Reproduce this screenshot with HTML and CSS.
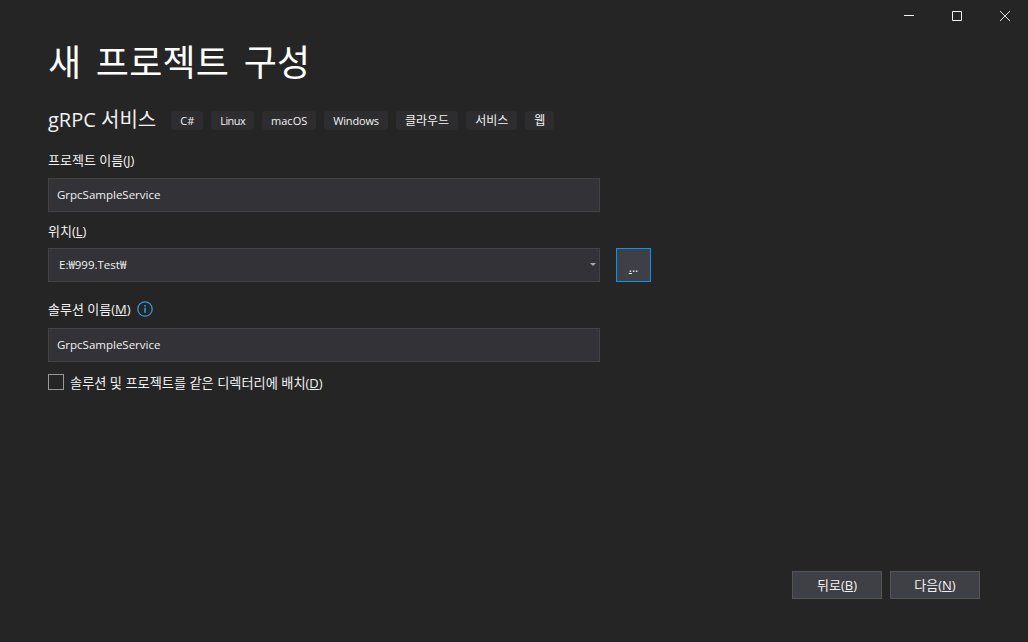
FILE: index.html
```html
<!DOCTYPE html>
<html lang="ko">
<head>
<meta charset="utf-8">
<title>새 프로젝트 구성</title>
<link rel="stylesheet" href="styles.css">
</head>
<body>
<div class="window">
  <div class="titlebar">
    <span class="win-btn"><svg width="10" height="10" viewBox="0 0 10 10"><path d="M0 4.5h10" stroke="#f1f1f1" fill="none"/></svg></span>
    <span class="win-btn"><svg width="10" height="10" viewBox="0 0 10 10"><path d="M.5.5h9v9h-9z" stroke="#f1f1f1" fill="none"/></svg></span>
    <span class="win-btn"><svg width="10" height="10" viewBox="0 0 10 10"><path d="M0 0l10 10M10 0L0 10" stroke="#e0e0e0" fill="none"/></svg></span>
  </div>
  <main class="content">
    <h1 class="title">새 프로젝트 구성</h1>
    <div class="template-row">
      <span class="template-name">gRPC 서비스</span>
      <div class="tags">
        <span class="tag">C#</span><span class="tag tag-tight">Linux</span><span class="tag">macOS</span><span class="tag tag-win">Windows</span><span class="tag tag-ko">클라우드</span><span class="tag tag-ko">서비스</span><span class="tag tag-ko">웹</span>
      </div>
    </div>
    <label class="label label-first">프로젝트 이름<span class="key">(<u>J</u>)</span></label>
    <div class="input">GrpcSampleService</div>
    <label class="label label-second">위치<span class="key">(<u>L</u>)</span></label>
    <div class="location-row">
      <div class="input input-select">
        <span>E:₩999.Test₩</span>
        <span class="caret"></span>
      </div>
      <button class="browse"><span><u>.</u>..</span></button>
    </div>
    <div class="label label-third">
      <span>솔루션 이름<span class="key">(<u>M</u>)</span></span>
      <svg class="info" width="16" height="16" viewBox="0 0 16 16"><circle cx="8" cy="8" r="7.2" fill="none" stroke="#3794dc" stroke-width="1.3"/><rect x="7.2" y="6.8" width="1.6" height="5" fill="#3794dc"/><rect x="7.2" y="4" width="1.6" height="1.7" fill="#3794dc"/></svg>
    </div>
    <div class="input">GrpcSampleService</div>
    <div class="check-row">
      <span class="checkbox"></span>
      <span>솔루션 및 프로젝트를 같은 디렉터리에 배치<span class="key">(<u>D</u>)</span></span>
    </div>
  </main>
  <footer class="footer">
    <button class="btn">뒤로<span class="key">(<u>B</u>)</span></button>
    <button class="btn">다음<span class="key">(<u>N</u>)</span></button>
  </footer>
</div>
</body>
</html>
```

FILE: styles.css
```css
* { box-sizing: border-box; }
html, body { margin: 0; height: 100%; }
body {
  background: #252526;
  color: #f1f1f1;
  font-family: "Open Sans", "Noto Sans CJK KR", sans-serif;
  font-size: 12px;
  overflow: hidden;
}
.window { height: 642px; display: flex; flex-direction: column; }
.titlebar { display: flex; justify-content: flex-end; gap: 2px; height: 32px; }
.win-btn { width: 46px; height: 32px; display: flex; align-items: center; justify-content: center; }
.content { flex: 1; padding: 0 0 0 48px; display: flex; flex-direction: column; align-items: flex-start; }
.title { margin: 7px 0 0; font-size: 36px; line-height: 48px; font-weight: 400; letter-spacing: .2px; word-spacing: 5px; color: #fff; }
.template-row { display: flex; align-items: center; margin-top: 21px; height: 24px; }
.template-name { font-size: 20px; line-height: 24px; color: #f1f1f1; }
.tags { display: flex; gap: 8px; margin-left: 15px; }
.tag { height: 19px; padding: 0 9px; background: #2d2d30; border-radius: 4px; font-size: 11px; line-height: 19px; color: #f1f1f1; }
.tag-tight { letter-spacing: -.6px; }
.tag-win { letter-spacing: -.15px; }
.tag-ko { font-size: 12px; }
.label { display: flex; align-items: center; font-size: 13px; line-height: 18px; color: #f1f1f1; }
.key { font-size: 13px; }
.label-first { margin-top: 19px; margin-bottom: 9px; }
.label-second { margin-top: 10px; margin-bottom: 8px; }
.label-third { margin-top: 18px; margin-bottom: 10px; gap: 6px; }
.input { width: 552px; height: 34px; background: #333337; border: 1px solid #434346; padding: 0 8px 2px; display: flex; align-items: center; font-size: 11.5px; color: #f1f1f1; }
.location-row { display: flex; gap: 16px; }
.input-select { justify-content: space-between; padding: 0 3px 2px 10px; }
.caret { width: 0; height: 0; border-left: 3.5px solid transparent; border-right: 3.5px solid transparent; border-top: 3px solid #a8a8a8; }
.browse { width: 35px; height: 34px; background: #3f3f46; border: 1px solid #0097fb; color: #f1f1f1; font: 12px "Open Sans", sans-serif; padding: 0; display: flex; align-items: center; justify-content: center; }
.browse span { line-height: 1; position: relative; top: 3px; }
.check-row { display: flex; align-items: center; gap: 6px; margin-top: 12px; height: 16px; font-size: 13.2px; }
.checkbox { width: 16px; height: 16px; border: 1px solid #999; background: #252526; }
.footer { display: flex; justify-content: flex-end; gap: 8px; padding: 0 48px 43px 0; }
.btn { width: 90px; height: 28px; background: #3f3f46; border: 1px solid #555; color: #f1f1f1; font: 13px "Open Sans", "Noto Sans CJK KR", sans-serif; padding: 0 0 2px; }
```
